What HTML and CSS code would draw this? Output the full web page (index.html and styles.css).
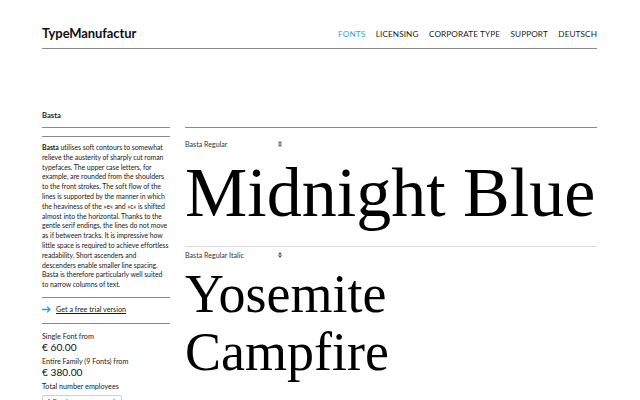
FILE: index.html
```html
<!DOCTYPE html>
<html lang="en">
<head>
<meta charset="utf-8">
<title>Basta – TypeManufactur</title>
<link rel="stylesheet" href="styles.css">
</head>
<body>
<div class="page">
  <header class="header">
    <div class="logo">TypeManufactur</div>
    <nav class="nav">
      <a class="nav-link active" href="#">FONTS</a>
      <a class="nav-link" href="#">LICENSING</a>
      <a class="nav-link" href="#">CORPORATE TYPE</a>
      <a class="nav-link" href="#">SUPPORT</a>
      <a class="nav-link" href="#">DEUTSCH</a>
    </nav>
  </header>

  <div class="layout">
    <aside class="sidebar">
      <h2 class="side-title">Basta</h2>
      <p class="desc"><b>Basta</b> utilises soft contours to somewhat relieve the austerity of sharply cut roman typefaces. The upper case letters, for example, are rounded from the shoulders to the front strokes. The soft flow of the lines is supported by the manner in which the heaviness of the »e« and »c« is shifted almost into the horizontal. Thanks to the gentle serif endings, the lines do not move as if between tracks. It is impressive how little space is required to achieve effortless readability. Short ascenders and descenders enable smaller line spacing. Basta is therefore particularly well suited to narrow columns of text.</p>
      <div class="trial">
        <svg class="arrow" width="9" height="7" viewBox="0 0 9 7"><path d="M0 3.5H8M5 0.6L8 3.5L5 6.4" fill="none" stroke="#2b9fde" stroke-width="1.3"/></svg>
        <a class="trial-link" href="#">Get a free trial version</a>
      </div>
      <div class="prices">
        <div class="price-label">Single Font from</div>
        <div class="price">€ 60.00</div>
        <div class="price-label">Entire Family (9 Fonts) from</div>
        <div class="price">€ 380.00</div>
        <div class="price-label">Total number employees</div>
        <div class="select-box">
          <span>1 Employee</span>
          <svg class="updown" width="4" height="6" viewBox="0 0 4 6"><path d="M2 0L4 2.4H0ZM2 6L4 3.6H0Z" fill="#555"/></svg>
        </div>
      </div>
    </aside>

    <main class="samples">
      <section class="sample">
        <div class="style-select">
          <span>Basta Regular</span>
          <svg class="updown" width="4" height="6" viewBox="0 0 4 6"><path d="M2 0L4 2.4H0ZM2 6L4 3.6H0Z" fill="#555"/></svg>
        </div>
        <div class="sample-text big">Midnight Blue</div>
      </section>
      <section class="sample second">
        <div class="style-select">
          <span>Basta Regular Italic</span>
          <svg class="updown" width="4" height="6" viewBox="0 0 4 6"><path d="M2 0L4 2.4H0ZM2 6L4 3.6H0Z" fill="#555"/></svg>
        </div>
        <div class="sample-text medium">Yosemite Campfire</div>
      </section>
    </main>
  </div>
</div>
</body>
</html>
```

FILE: styles.css
```css
* { box-sizing: border-box; }

html, body {
  margin: 0;
  padding: 0;
  background: #fff;
  color: #1e1e1e;
  font-family: Lato, "Open Sans", sans-serif;
  overflow: hidden;
}

.page {
  width: 555px;
  margin-left: 42px;
}

.header {
  display: flex;
  justify-content: space-between;
  align-items: center;
  height: 49px;
  padding-top: 17px;
  border-bottom: 1px solid #8a8a8a;
}

.logo {
  font-size: 13px;
  font-weight: 700;
  letter-spacing: -0.1px;
  color: #111;
}

.nav {
  display: flex;
  gap: 10.5px;
  padding-top: 3px;
}

.nav-link {
  font-size: 8.2px;
  color: #1a1a1a;
  text-decoration: none;
  letter-spacing: 0.1px;
}

.nav-link.active { color: #3a9ee0; }

.layout {
  display: grid;
  grid-template-columns: 128px 412px;
  column-gap: 15px;
  align-items: start;
  margin-top: 60px;
}

.side-title {
  margin: 0;
  font-size: 7.6px;
  font-weight: 700;
  line-height: 12px;
  padding-bottom: 6px;
  border-bottom: 1px solid #8a8a8a;
}

.desc {
  margin: 8px 0 0;
  padding: 6px 0 7px;
  border-top: 1px solid #8a8a8a;
  border-bottom: 1px solid #8a8a8a;
  font-size: 6.9px;
  line-height: 9.8px;
  letter-spacing: -0.05px;
  color: #1a1a1a;
}

.desc b { font-weight: 700; }

.trial {
  display: flex;
  align-items: center;
  gap: 5px;
  padding: 5px 0 7px;
  height: 26px;
  border-bottom: 1px solid #8a8a8a;
}

.trial-link {
  font-size: 7.2px;
  color: #1a1a1a;
  text-decoration: underline;
}

.prices {
  padding-top: 8px;
}

.price-label {
  font-size: 7.2px;
  line-height: 10px;
  color: #1a1a1a;
}

.price {
  font-size: 10.2px;
  line-height: 11px;
  margin: 0 0 4px;
  color: #111;
}

.select-box {
  display: flex;
  justify-content: space-between;
  align-items: center;
  width: 80px;
  height: 14px;
  margin-top: 3px;
  padding: 0 5px 0 4px;
  border: 1px solid #cfcfcf;
  border-radius: 2px;
  font-size: 6.8px;
  color: #333;
}

.samples {
  margin-top: 18px;
  border-top: 1px solid #8a8a8a;
}

.sample {
  padding-top: 11px;
  padding-bottom: 18px;
}

.sample.second {
  border-top: 1px solid #dcdcdc;
  padding-top: 3px;
}

.style-select {
  display: flex;
  justify-content: space-between;
  align-items: center;
  width: 97px;
  height: 10px;
  font-size: 7.1px;
  color: #333;
}

.sample-text {
  font-family: "Liberation Serif", "Times New Roman", serif;
  color: #000;
  white-space: nowrap;
}

.sample-text.big {
  font-size: 70px;
  line-height: 70px;
  margin-top: 9px;
}

.sample-text.medium {
  font-size: 54px;
  line-height: 58px;
  margin-top: 5px;
  white-space: normal;
  width: 250px;
}
```
